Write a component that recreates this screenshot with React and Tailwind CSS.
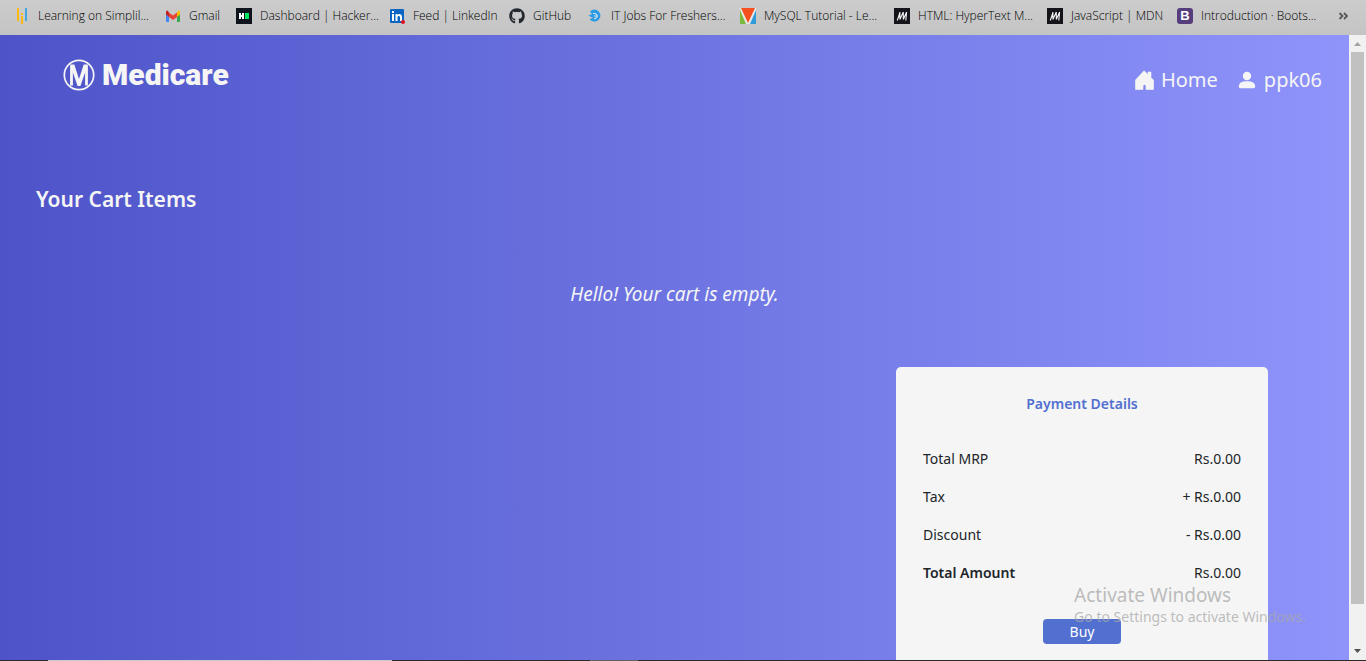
import { FaGithub } from "react-icons/fa";

const MdnIcon = () => (
  <svg viewBox="0 0 16 16" className="size-4 shrink-0" aria-hidden="true">
    <rect width="16" height="16" fill="#15141a" />
    <path d="M3.300 12.500L5.900 4.500M5.900 4v7.500M5.900 11.500L9.300 4M9.300 4v7.500M9.300 11.500L12.600 4M12.600 4l-.8 8.500" fill="none" stroke="#f4f4f4" strokeWidth="1.100" />
  </svg>
);

const HomeIcon = () => (
  <svg viewBox="0 0 19 20" className="h-5 w-[19px]" fill="currentColor" aria-hidden="true">
    <path d="M9 .8L13 4.500V2h3v5.500l2.500 2.500V19.500H11V16a1.500 1.500 0 0 0-3 0v3.500H.5V10z" stroke="currentColor" strokeWidth=".6" strokeLinejoin="round" />
  </svg>
);

const UserIcon = () => (
  <svg viewBox="0 0 18 18" className="size-[18px]" fill="currentColor" aria-hidden="true">
    <circle cx="9" cy="5" r="4.200" />
    <path d="M.8 15.500C.8 12 3.500 10.300 9 10.300s8.200 1.700 8.200 5.200c0 1-.7 1.700-1.700 1.700h-13C1.500 17.200.8 16.500.8 15.500z" />
  </svg>
);

const bookmarks = [
  {
    label: "Learning on Simplil...",
    width: "w-[149px]",
    gap: "gap-[6px]",
    icon: (
      <svg viewBox="0 0 16 16" className="size-4 shrink-0" aria-hidden="true">
        <path d="M1 0h2v13H1zM5 8h2v8H5zM5 5h2v2H5z" fill="#fdb913" />
        <path d="M9 0h2v13H9z" fill="#41a8e0" />
      </svg>
    ),
  },
  {
    label: "Gmail",
    width: "w-[71px]",
    icon: (
      <svg viewBox="0 0 16 16" className="size-4 shrink-0" aria-hidden="true">
        <path d="M1 4v9a1 1 0 0 0 1 1h2V6.500z" fill="#4285f4" />
        <path d="M15 4v9a1 1 0 0 1-1 1h-2V6.500z" fill="#34a853" />
        <path d="M4 9V4.500l4 3 4-3V9l-4 3z" fill="#ea4335" />
        <path d="M1 4.500v2L4 9V4.500L3 3C2 2 1 3 1 4.500z" fill="#c5221f" />
        <path d="M15 4.500v2L12 9V4.500L13 3c1-1 2 0 2 1.500z" fill="#fbbc04" />
      </svg>
    ),
  },
  {
    label: "Dashboard | Hacker...",
    width: "w-[153px]",
    icon: (
      <svg viewBox="0 0 16 16" className="size-4 shrink-0" aria-hidden="true">
        <rect width="16" height="16" fill="#0e141e" />
        <path d="M3 5h2v2h1V5h2v6H6V9H5v2H3z" fill="#fff" />
        <rect x="9" y="5" width="4" height="6" fill="#05e561" />
      </svg>
    ),
  },
  {
    label: "Feed | LinkedIn",
    width: "w-[120px]",
    icon: (
      <svg viewBox="0 0 16 16" className="size-4 shrink-0" aria-hidden="true">
        <rect x="1" y="1" width="14" height="14" rx="1" fill="#0a66c2" />
        <path d="M3 6h2v7H3zM3 3h2v2H3zM6.500 6h2v1c1-1.500 4.500-1.500 4.500 2v4h-2V9.500c0-2-2.500-2-2.500 0V13h-2z" fill="#fff" />
        <circle cx="14" cy="14" r="2" fill="#e01020" />
      </svg>
    ),
  },
  { label: "GitHub", width: "w-[78px]", icon: <FaGithub className="size-4 shrink-0 text-[#24292f]" aria-hidden="true" /> },
  {
    label: "IT Jobs For Freshers...",
    width: "w-[153px]",
    icon: (
      <svg viewBox="0 0 16 16" className="size-4 shrink-0" aria-hidden="true">
        <path d="M3 3.500a6 6 0 1 1-.5 7.500L6 10 1.500 7.500 5 6z" fill="#2e9be6" />
        <path d="M6 5.500h2.500l2 2.500-2 2.500H7M7 8h3" fill="none" stroke="#cde3f2" strokeWidth="1.100" />
      </svg>
    ),
  },
  {
    label: "MySQL Tutorial - Le...",
    width: "w-[154px]",
    icon: (
      <svg viewBox="0 0 16 16" className="size-4 shrink-0" aria-hidden="true">
        <rect width="16" height="16" fill="#e8e8e8" />
        <path d="M0 2v14h6z" fill="#7cba3d" />
        <path d="M16 2v14h-6z" fill="#2f9bd8" />
        <path d="M1 0h14L8 15z" fill="#f4511e" />
      </svg>
    ),
  },
  { label: "HTML: HyperText M...", width: "w-[153px]", icon: <MdnIcon /> },
  { label: "JavaScript | MDN", width: "w-[130px]", icon: <MdnIcon /> },
  {
    label: "Introduction · Boots...",
    width: "w-[154px]",
    icon: (
      <span className="flex size-4 shrink-0 items-center justify-center rounded-[3px] bg-[#563d7c] font-['Liberation_Sans',sans-serif] text-[13px] leading-4 font-bold text-white" aria-hidden="true">
        B
      </span>
    ),
  },
];

const charges = [
  { label: "Total MRP", amount: "Rs.0.00" },
  { label: "Tax", amount: "+ Rs.0.00" },
  { label: "Discount", amount: "- Rs.0.00" },
  { label: "Total Amount", amount: "Rs.0.00", strong: true },
];

function BookmarksBar() {
  return (
    <nav aria-label="Bookmarks" className="flex h-[35px] items-center bg-linear-to-b from-[#cccccc] to-[#c4c4c4] px-4 pb-1 font-['Open_Sans','Noto_Sans',sans-serif] text-[12px] font-light text-black">
      {bookmarks.map((b) => (
        <a key={b.label} href="#" className={`flex shrink-0 items-center whitespace-nowrap ${b.gap ?? "gap-2"} ${b.width}`}>
          {b.icon}
          {b.label}
        </a>
      ))}
      <button type="button" aria-label="More bookmarks" className="ml-auto">
        <svg viewBox="0 0 12 12" className="size-3" fill="none" stroke="#55585c" strokeWidth="1.800" aria-hidden="true">
          <path d="M1.500 3l3 3-3 3M6 3l3 3-3 3" />
        </svg>
      </button>
    </nav>
  );
}

function Scrollbar() {
  return (
    <div className="flex w-[17px] shrink-0 flex-col items-center bg-[#f1f1f1]" aria-hidden="true">
      <svg viewBox="0 0 17 17" className="size-[17px] shrink-0">
        <path d="M5 11h7L8.500 7z" fill="#a3a3a3" />
      </svg>
      <div className="w-[13px] grow bg-[#c1c1c1]" />
      <div className="h-[39px] shrink-0" />
      <svg viewBox="0 0 17 17" className="size-[17px] shrink-0">
        <path d="M5 6h7l-3.500 4z" fill="#505050" />
      </svg>
    </div>
  );
}

function PaymentCard() {
  return (
    <section className="mr-[81px] w-[372px] rounded-t-[5px] bg-[#f5f5f5] px-[27px] pt-[25px] text-[#212529]">
      <h2 className="text-center text-[14px] leading-6 font-semibold text-[#5270d0]">Payment Details</h2>
      <dl className="mt-[31px] flex flex-col gap-[14px] text-[14px] leading-6">
        {charges.map((c) => (
          <div key={c.label} className="flex justify-between">
            <dt className={c.strong ? "font-semibold" : ""}>{c.label}</dt>
            <dd>{c.amount}</dd>
          </div>
        ))}
      </dl>
      <div className="mt-[34px] flex justify-center">
        <button type="button" className="h-[25px] w-[78px] rounded-[4px] bg-[#5270d0] text-[14px] leading-6 text-white">
          Buy
        </button>
      </div>
    </section>
  );
}

export default function App() {
  return (
    <div className="relative flex min-h-screen flex-col font-['Noto_Sans','Open_Sans',sans-serif]">
      <BookmarksBar />
      <div className="flex grow">
        <main className="flex grow flex-col bg-linear-to-r from-[#4e54c8] to-[#8f94fb] text-[#f5f5f5]">
          <header className="flex items-center justify-between pt-[19px] pr-[27px] pl-[63px]">
            <a href="#" className="flex items-center gap-[7px] font-['Roboto','Liberation_Sans',sans-serif] text-[30px] leading-10 font-black">
              <svg viewBox="0 0 32 32" className="size-8" fill="none" stroke="currentColor" aria-hidden="true">
                <circle cx="16" cy="16" r="14.700" strokeWidth="1.700" />
                <path d="M8.500 26.500V6.500M23.500 26.500V6.500" strokeWidth="2.800" />
                <path d="M7.100 5.500h4.200L16 20l4.700-14.500h4.200L17.400 27h-2.800z" fill="currentColor" stroke="none" />
              </svg>
              Medicare
            </a>
            <nav aria-label="Main" className="flex gap-5 pt-[10px] text-[20px] leading-8">
              <a href="#" className="flex items-center gap-[7px]">
                <HomeIcon />
                Home
              </a>
              <a href="#" className="flex items-center gap-2">
                <UserIcon />
                ppk06
              </a>
            </nav>
          </header>
          <h1 className="mt-[87px] pl-9 text-[21px] leading-8 font-semibold">Your Cart Items</h1>
          <p className="mt-[65px] text-center text-[19px] leading-7 italic">Hello! Your cart is empty.</p>
          <div className="mt-[59px] flex grow justify-end">
            <PaymentCard />
          </div>
        </main>
        <Scrollbar />
      </div>
      <footer className="flex h-px bg-[#2a2a2a]" aria-hidden="true">
        <div className="ml-12 w-[344px] bg-[#c8c8c8]" />
        <div className="ml-[198px] w-12 bg-[#606060]" />
      </footer>
      <aside className="pointer-events-none absolute right-[60px] bottom-[34px] text-[#a8a8a8]/75">
        <p className="text-[19px] leading-6">Activate Windows</p>
        <p className="text-[14px] leading-5">Go to Settings to activate Windows.</p>
      </aside>
    </div>
  );
}
